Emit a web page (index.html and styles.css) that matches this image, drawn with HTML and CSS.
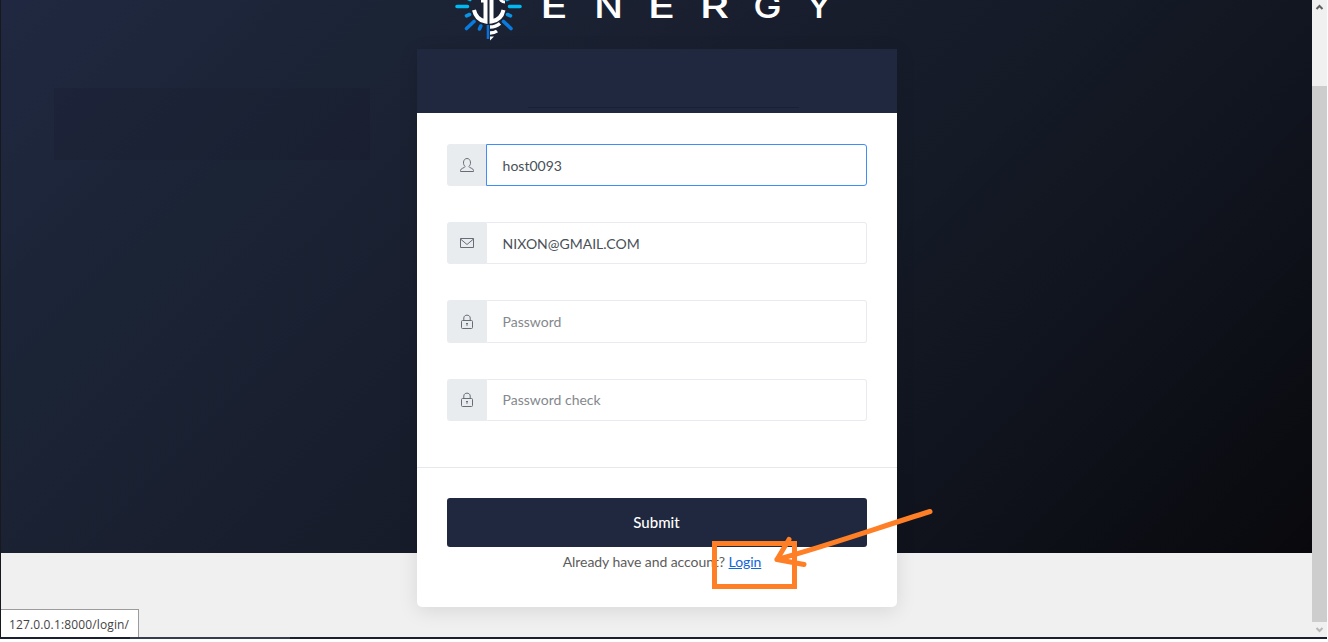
FILE: index.html
```html
<!DOCTYPE html>
<html lang="en">
<head>
<meta charset="utf-8">
<title>Energy</title>
<link rel="stylesheet" href="styles.css">
</head>
<body>
<div class="screen">
  <div class="view">
    <main class="page">
      <div class="ghost"></div>
      <header class="brand">
        <svg class="bulb" width="70" height="42" viewBox="0 0 70 42" fill="none">
          <g stroke="#00b9f2" stroke-width="3.6" stroke-linecap="round">
            <path d="M3 6.500H13.500M55.500 6.500H66M13 -2L16 -.5M56 -2L53 -.5"/>
          </g>
          <g stroke="#0b93e6" stroke-width="3.6" stroke-linecap="round"><path d="M12.500 15.800L15.500 14.500M56.500 15.800L53.500 14.500"/></g>
          <g stroke="#087be0" stroke-width="3.6" stroke-linecap="round"><path d="M12.500 28.500L20 21.500M57 28.500L49.500 21.500M25.500 29L26.800 26"/></g>
          <path d="M34 25V39" stroke="#0b6fd8" stroke-width="2.600"/>
          <g stroke="#fff" stroke-width="4"><path d="M20 10C21.500 17 26 20.500 31.500 21.500V-2M49.500 10C48 17 43.500 20.500 37.500 21.500V-2"/><path d="M27 1H31M46 -3C46 0 48 2 51 2" stroke-width="3"/></g>
          <path d="M36 27C40 27 43 26 46 23.500M36 33C39 33 41 32.500 43 31" stroke="#fff" stroke-width="3.400"/><path d="M36 36.500H40L36 40.500Z" fill="#fff"/>
        </svg>
        <div class="wordmark"><span>E</span><span>N</span><span>E</span><span>R</span><span>G</span><span>Y</span></div>
      </header>
      <form class="card">
        <div class="card-head"><div class="rule"></div></div>
        <div class="fields">
          <label class="field focus"><span class="addon"><svg class="icon" width="16" height="16" viewBox="0 0 16 16"><path d="M6.200 9.500C3.600 8 3.800 1.500 8 1.500S12.400 8 9.800 9.500C10 11 14.500 11 14.500 13.500V14.500H1.500V13.500C1.500 11 6 11 6.200 9.500Z"/></svg></span><span class="value">host0093</span></label>
          <label class="field"><span class="addon"><svg class="icon" width="16" height="16" viewBox="0 0 16 16"><path d="M1.500 3.500H14.500V12.500H1.500ZM1.500 4L8 9.500L14.500 4"/></svg></span><span class="value">NIXON@GMAIL.COM</span></label>
          <label class="field tall"><span class="addon"><svg class="icon" width="16" height="16" viewBox="0 0 16 16"><path d="M3.500 6.500H12.500Q13.500 6.500 13.500 7.500V13.500Q13.500 14.500 12.500 14.500H3.500Q2.500 14.500 2.500 13.500V7.500Q2.500 6.500 3.500 6.500ZM4.800 6.500V4C4.800 .2 11.200 .2 11.200 4V6.500M7 9.500H9M8 9.500V11.800"/></svg></span><span class="value hint">Password</span></label>
          <label class="field"><span class="addon"><svg class="icon" width="16" height="16" viewBox="0 0 16 16"><path d="M3.500 6.500H12.500Q13.500 6.500 13.500 7.500V13.500Q13.500 14.500 12.500 14.500H3.500Q2.500 14.500 2.500 13.500V7.500Q2.500 6.500 3.500 6.500ZM4.800 6.500V4C4.800 .2 11.200 .2 11.200 4V6.500M7 9.500H9M8 9.500V11.800"/></svg></span><span class="value hint">Password check</span></label>
        </div>
        <div class="card-foot">
          <button class="submit" type="button">Submit</button>
          <p class="account">Already have and account? <a href="#">Login</a></p>
        </div>
      </form>
      <div class="status">127.0.0.1:8000/login/</div>
      <svg class="marker" width="230" height="90" viewBox="0 0 230 90" fill="none" stroke="#ff7f27">
        <path d="M4.500 38.500H84.500V81.500H4.500Z" stroke-width="5"/>
        <path d="M220 6.500C170 22 120 40 67 54.500M79 34.500L67 54.500L94 59.500" stroke-width="5" stroke-linecap="round" stroke-linejoin="round"/>
      </svg>
    </main>
    <div class="scrollbar">
      <svg class="arrow" width="15" height="17" viewBox="0 0 15 17"><path d="M4.500 9L7.500 6L10.500 9" stroke="#606060"/></svg>
      <div class="thumb"></div>
      <svg class="arrow" width="15" height="15" viewBox="0 0 15 15"><path d="M4.500 6L7.500 9L10.500 6" stroke="#b8b8b8"/></svg>
    </div>
  </div>
  <div class="taskbar"><div class="task"></div></div>
</div>
</body>
</html>
```
FILE: styles.css
```css
* { box-sizing: border-box; }
body { margin: 0; background: #fff; font-family: Lato, sans-serif; font-size: 14px; color: #495057; }
.screen { width: 1327px; height: 639px; overflow: hidden; }
.view { display: flex; height: 637px; }
.page { position: relative; flex: 1; border-left: 1px solid #17191f; background: linear-gradient(135deg, #1f2840 0%, #1b2435 22%, #191e2e 42%, #141a26 60%, #0f121b 80%, #09090d 100%) 0 0 / 100% 553px no-repeat #f0f0f0; overflow: hidden; }
.ghost { position: absolute; left: 53px; top: 88px; width: 316px; height: 72px; background: rgba(20, 16, 35, .13); }
.brand { display: flex; height: 49px; padding-left: 453px; }
.bulb { flex: none; display: block; }
.wordmark { display: grid; grid-template-columns: 56px 53px 53px 53px 53px 50px; margin: -15px 0 0 2px; height: 40px; color: #fff; font: 500 33px/42px Inter, sans-serif; text-align: center; }
.wordmark span { transform: scaleX(1.38); }
.wordmark span:nth-child(2), .wordmark span:nth-child(5), .wordmark span:nth-child(6) { transform: scaleX(1.15); }
.card { width: 480px; height: 558px; margin: 0 0 0 416px; background: #fff; border-radius: 0 0 5px 5px; box-shadow: 0 4px 20px rgba(0, 0, 0, .1); }
.card-head { height: 64px; padding: 58px 98px 0 111px; background: #202840; }
.rule { height: 1px; background: #1a2034; }
.fields { display: flex; flex-direction: column; gap: 36px; height: 355px; padding: 31px 30px 0; border-bottom: 1px solid #e6e8ea; }
.field { display: flex; height: 42px; flex: none; }
.field.tall { height: 43px; }
.addon { display: flex; align-items: center; justify-content: center; width: 39px; background: #e9ecef; border-radius: 3px 0 0 3px; }
.icon { fill: none; stroke: #666d76; stroke-width: 1; }
.value { flex: 1; padding: 0 0 0 15.6px; border: 1px solid #e9ebf0; border-left-color: #e9ecef; border-radius: 0 3px 3px 0; line-height: 41px; font-size: 14px; }
.value.hint { color: #84888d; }
.field:last-child .value { line-height: 40px; }
.focus .value { border-color: #3e8ef7; }
.card-foot { padding: 30px 30px 0; }
.submit { display: block; width: 100%; height: 49px; padding: 0 1px 0 0; border: 0; border-radius: 3px; background: #202840; color: #fff; font: 500 15px/49px Lato, sans-serif; }
.account { margin: 4px 0 0; padding-left: 10px; text-align: center; line-height: 21px; letter-spacing: -.06px; color: #5c5c5c; }
.account a { color: #1166d8; text-decoration: underline; }
.status { position: absolute; left: 0; bottom: 0; width: 138px; height: 28px; padding-left: 8px; border: solid #9c9c9c; border-width: 1px 1px 0 0; background: #fff; color: #444; font: 12px/29px "Open Sans", sans-serif; letter-spacing: .14px; white-space: nowrap; }
.marker { position: absolute; left: 709px; top: 505px; }
.scrollbar { display: flex; flex-direction: column; width: 15px; background: #f0f0f0; }
.arrow { flex: none; display: block; fill: none; stroke-width: 2; }
.thumb { height: 536px; margin-top: 69px; background: #cdcdcd; }
.taskbar { height: 2px; padding-left: 130px; background: #1a2030; }
.task { width: 160px; height: 2px; background: #353d50; }
```
